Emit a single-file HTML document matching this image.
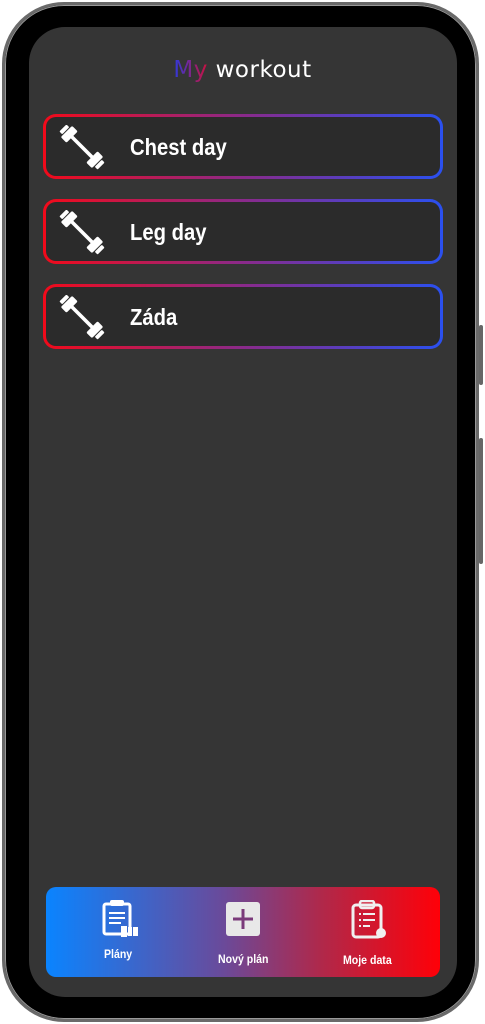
<!DOCTYPE html>
<html><head><meta charset="utf-8"><style>
*{margin:0;padding:0;box-sizing:border-box}
body{width:485px;height:1024px;background:#fff;position:relative;overflow:hidden;font-family:"Liberation Sans",sans-serif}
.frame{position:absolute;left:2px;top:2px;width:477px;height:1020px;border-radius:62px;background:#000;border:3px solid #6a6a6a;box-shadow:inset 0 0 0 1px #999}
.btn{position:absolute;left:479px;width:4px;background:#666;border-radius:2px}
.screen{position:absolute;left:29px;top:27px;width:428px;height:970px;border-radius:36px;background:#353535}
.title{position:absolute;left:0;width:485px;top:57px;text-align:center;font-size:23px;color:#fff;letter-spacing:.5px;font-family:"DejaVu Sans",sans-serif}
.title span{background:linear-gradient(90deg,#2a3ae0,#d0103a);-webkit-background-clip:text;color:transparent}
.card{position:absolute;left:43px;width:400px;height:65px;border-radius:13px;padding:3px;background:linear-gradient(90deg,#f20a1a,#8a2a8a 50%,#2a50f0)}
.card .in{width:100%;height:100%;border-radius:10px;background:#2b2b2b;position:relative}
.card .t{position:absolute;left:84px;top:17px;font-size:23px;font-weight:bold;color:#fff;transform:scaleX(.88);transform-origin:left}
.card svg{position:absolute;left:13px;top:8px}
.nav{position:absolute;left:46px;top:887px;width:394px;height:90px;border-radius:10px;background:linear-gradient(90deg,#0a84ff,#6a4a9a 45%,#b0284a 70%,#ff0008)}
.lbl{position:absolute;font-size:12px;font-weight:bold;color:#fff;transform:scaleX(.88);transform-origin:left}
</style></head><body>
<div class="frame"></div>
<div class="btn" style="top:325px;height:60px"></div>
<div class="btn" style="top:438px;height:126px"></div>
<div class="screen"></div>
<div class="title"><span>My</span> workout</div>
<svg width="0" height="0" style="position:absolute"><defs><g id="db" fill="#fff">
<g transform="translate(23 22) rotate(45)">
<rect x="-20" y="-1.8" width="40" height="3.6"/>
<rect x="-22" y="-8" width="8" height="16" rx="1.5"/>
<rect x="14" y="-8" width="8" height="16" rx="1.5"/>
<rect x="-27" y="-5" width="4" height="10" rx="1"/>
<rect x="23" y="-5" width="4" height="10" rx="1"/>
</g></g></defs></svg>
<div class="card" style="top:114px"><div class="in"><svg width="46" height="46"><use href="#db"/></svg><div class="t">Chest day</div></div></div>
<div class="card" style="top:199px"><div class="in"><svg width="46" height="46"><use href="#db"/></svg><div class="t">Leg day</div></div></div>
<div class="card" style="top:284px"><div class="in"><svg width="46" height="46"><use href="#db"/></svg><div class="t">Záda</div></div></div>
<div class="nav">
<svg style="position:absolute;left:55px;top:12px" width="42" height="42" viewBox="0 0 42 42">
<rect x="3" y="5" width="26" height="30" rx="2" fill="none" stroke="#fff" stroke-width="3"/>
<rect x="9" y="1" width="14" height="6" rx="2" fill="#fff"/>
<g stroke="#fff" stroke-width="2"><line x1="8" y1="14" x2="24" y2="14"/><line x1="8" y1="19" x2="24" y2="19"/><line x1="8" y1="24" x2="20" y2="24"/></g>
<rect x="20" y="27" width="6" height="11" fill="#fff"/><rect x="27" y="28" width="4" height="9" fill="#fff"/><rect x="32" y="28" width="5" height="9" fill="#fff"/>
</svg>
<div class="lbl" style="left:58px;top:60px">Plány</div>
<svg style="position:absolute;left:180px;top:15px" width="34" height="34"><rect width="34" height="34" rx="3" fill="#e8e8e8"/><g stroke="#7a3a7a" stroke-width="3"><line x1="17" y1="7" x2="17" y2="27"/><line x1="7" y1="17" x2="27" y2="17"/></g></svg>
<div class="lbl" style="left:172px;top:65px">Nový plán</div>
<svg style="position:absolute;left:304px;top:13px" width="40" height="40">
<rect x="3" y="5" width="28" height="32" rx="3" fill="none" stroke="#f0f0f0" stroke-width="3"/>
<rect x="10" y="1" width="14" height="7" rx="2" fill="none" stroke="#f0f0f0" stroke-width="2.5"/>
<g stroke="#f0f0f0" stroke-width="2"><line x1="9" y1="14" x2="11" y2="14"/><line x1="13" y1="14" x2="25" y2="14"/><line x1="9" y1="20" x2="11" y2="20"/><line x1="13" y1="20" x2="25" y2="20"/><line x1="9" y1="26" x2="11" y2="26"/><line x1="13" y1="26" x2="20" y2="26"/></g>
<circle cx="31" cy="33" r="5" fill="#f0f0f0"/></svg>
<div class="lbl" style="left:297px;top:66px">Moje data</div>
</div>
</body></html>
